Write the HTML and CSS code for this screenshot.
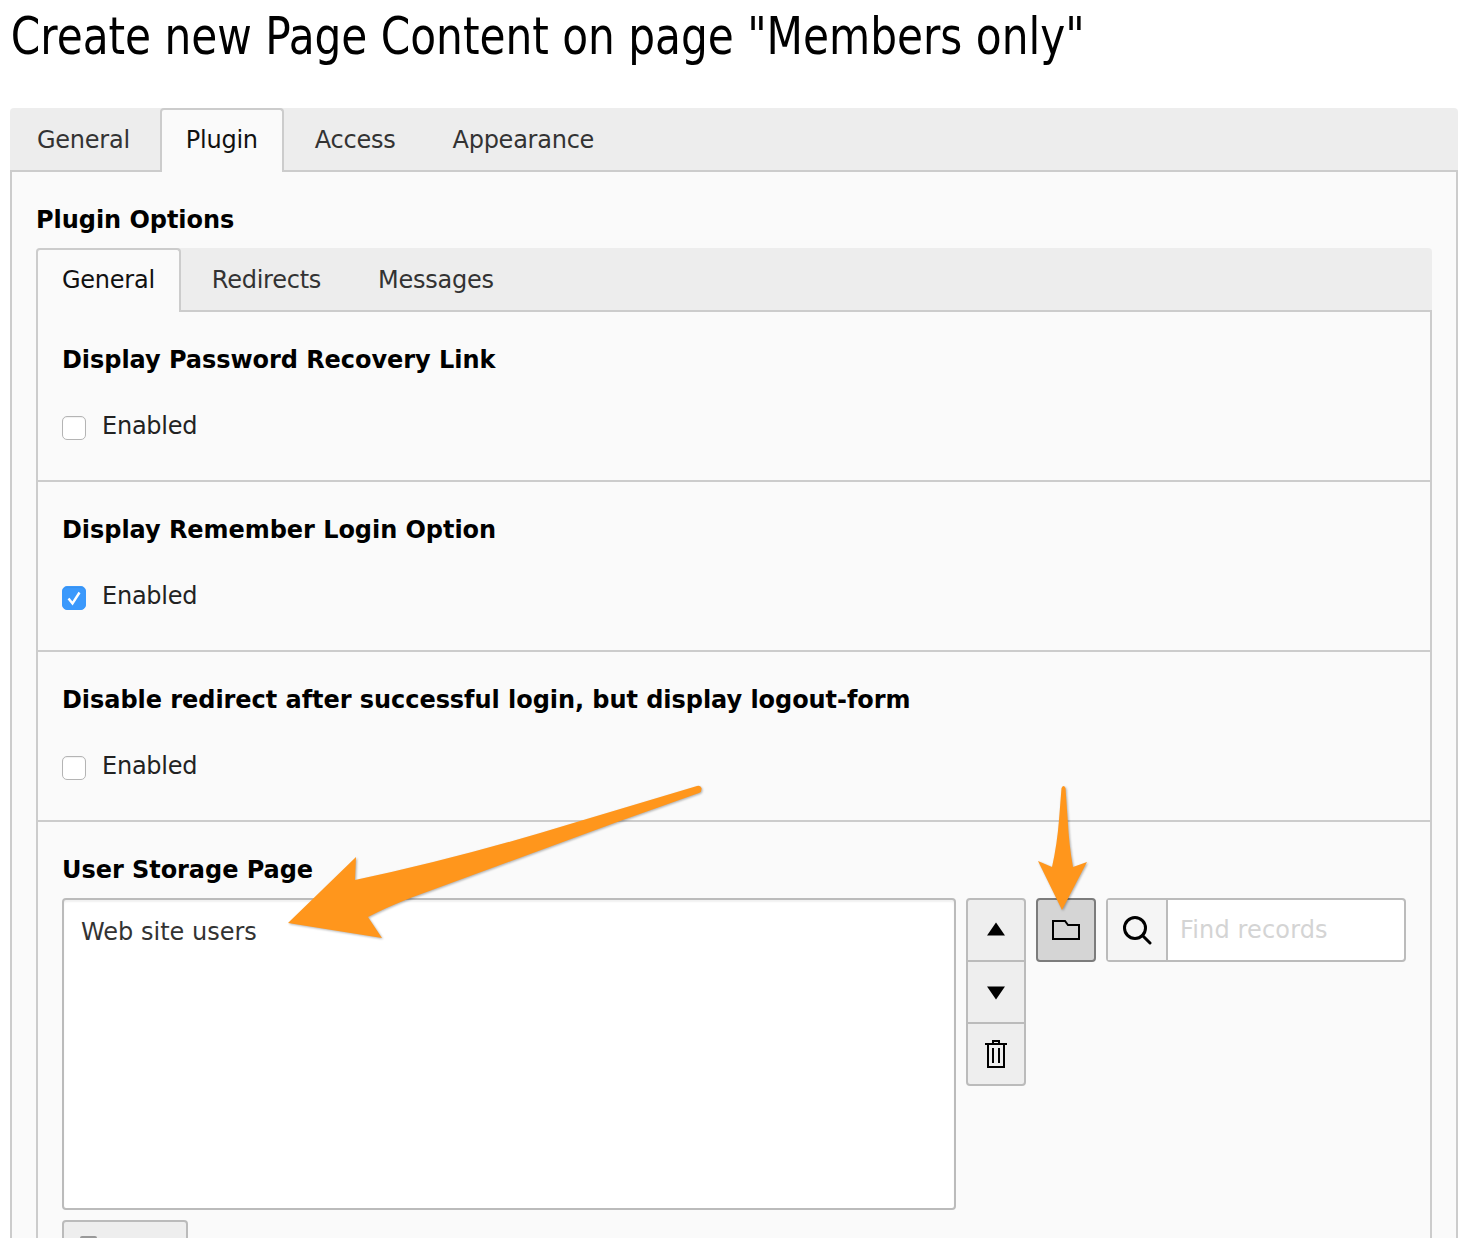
FILE: index.html
```html
<!DOCTYPE html>
<html lang="en">
<head>
<meta charset="utf-8">
<title>Create new Page Content</title>
<link rel="stylesheet" href="styles.css">
</head>
<body>
<h1 class="page-title">Create new Page Content on page "Members only"</h1>
<div class="outer">
  <div class="tabbar">
    <span class="tab">General</span>
    <span class="tab active">Plugin</span>
    <span class="tab">Access</span>
    <span class="tab">Appearance</span>
  </div>
  <div class="panel">
    <h2 class="panel-title">Plugin Options</h2>
    <div class="tabbar">
      <span class="tab active">General</span>
      <span class="tab">Redirects</span>
      <span class="tab">Messages</span>
    </div>
    <div class="inner">
      <section class="section">
        <h3 class="field-title">Display Password Recovery Link</h3>
        <div class="check-row"><span class="checkbox"></span><span>Enabled</span></div>
      </section>
      <section class="section">
        <h3 class="field-title">Display Remember Login Option</h3>
        <div class="check-row"><span class="checkbox checked"><svg viewBox="0 0 24 24" width="24" height="24"><path d="M6.500 12.500l4 5 7-11" fill="none" stroke="#fff" stroke-width="2.400"/></svg></span><span>Enabled</span></div>
      </section>
      <section class="section">
        <h3 class="field-title">Disable redirect after successful login, but display logout-form</h3>
        <div class="check-row"><span class="checkbox"></span><span>Enabled</span></div>
      </section>
      <section class="section storage">
        <h3 class="field-title tight">User Storage Page</h3>
        <div class="storage-row">
          <div class="listbox">Web site users</div>
          <div class="btn-stack">
            <span class="btn"><svg viewBox="0 0 20 16" width="20" height="16"><path d="M10 0.500L19 13.500H1Z"/></svg></span>
            <span class="btn"><svg viewBox="0 0 20 16" width="20" height="16"><path d="M1 2.500H19L10 15.500Z"/></svg></span>
            <span class="btn"><svg viewBox="0 0 24 30" width="24" height="30" class="line"><path d="M1 5H23M9 5V2H15V5M4 5V28H20V5M9 9V24M15 9V24"/></svg></span>
          </div>
          <span class="btn folder"><svg viewBox="0 0 28 20" width="28" height="20" class="line"><path d="M1 19V1H13L16 5H27V19Z"/></svg></span>
          <div class="search">
            <span class="search-icon"><svg viewBox="0 0 30 30" width="30" height="30" class="line thick"><circle cx="13" cy="13" r="10.500"/><path d="M20.500 20.500L28 28" stroke-linecap="round"/></svg></span>
            <span class="search-input">Find records</span>
          </div>
        </div>
        <div class="under-btn"><span class="under-icon"></span></div>
      </section>
    </div>
  </div>
</div>
<svg class="arrows" viewBox="0 0 1464 1238" width="1464" height="1238" aria-hidden="true">
  <path d="M697 786Q700 785 701.500 788Q702 792 699 793L620 821L413 897Q385 908 368 917L382 938L288 923L356 857L355 880Q460 858 580 821Z"/>
  <path d="M1061.500 788Q1063.500 784 1065.500 788L1067.700 820Q1069 845 1073 867L1087 862L1062 910L1038 861L1052 867Q1057 845 1059 820Z"/>
</svg>
</body>
</html>
```
FILE: styles.css
```css
* { box-sizing: border-box; }
html, body { margin: 0; height: 1238px; overflow: hidden; }
body {
  position: relative;
  background: #fff;
  color: #000;
  font-family: "DejaVu Sans", Verdana, sans-serif;
  font-size: 24px;
}
.page-title {
  margin: 0;
  height: 108px;
  padding: 6px 0 0 12px;
  font-family: "DejaVu Sans", sans-serif;
  font-stretch: condensed;
  font-weight: 400;
  font-size: 52px;
  line-height: 60px;
  white-space: nowrap;
  transform: scaleX(.903);
  transform-origin: 0 0;
}
.outer { margin-left: 10px; width: 1448px; }
.tabbar {
  display: flex;
  height: 64px;
  background: #ededed;
  border-bottom: 2px solid #ccc;
  border-radius: 4px 4px 0 0;
}
.tab {
  height: 64px;
  padding: 0 24px;
  border: 2px solid transparent;
  border-bottom: 0;
  margin-right: 5px;
  line-height: 61px;
  letter-spacing: -.25px;
  color: #333;
  white-space: nowrap;
}
.tab.active {
  background: #fafafa;
  border-color: #ccc;
  border-radius: 4px 4px 0 0;
  color: #111;
}
.outer > .tabbar > .tab:first-child { margin: 0 4px 0 1px; }
.panel {
  height: 1100px;
  padding: 32px 24px 0;
  background: #fafafa;
  border: 2px solid #ccc;
  border-top: 0;
}
.panel-title {
  margin: 0 0 12px;
  font-size: 24px;
  line-height: 32px;
  font-weight: 700;
  letter-spacing: -.05px;
}
.inner {
  border: 2px solid #ccc;
  border-top: 0;
  height: 1000px;
}
.section {
  height: 170px;
  padding: 32px 24px 0;
  border-bottom: 2px solid #ccc;
}
.section.storage { border-bottom: 0; height: auto; }
.field-title {
  margin: 0 0 40px;
  font-size: 24px;
  line-height: 32px;
  font-weight: 700;
  letter-spacing: -.05px;
}
.field-title.tight { margin-bottom: 12px; }
.check-row {
  display: flex;
  align-items: flex-start;
  gap: 16px;
  line-height: 20px;
  letter-spacing: -.25px;
  color: #222;
}
.checkbox {
  display: block;
  width: 24px;
  height: 24px;
  background: #fff;
  border: 1px solid #b4b4b4;
  border-radius: 5px;
  box-shadow: inset 0 1px 1px rgba(0,0,0,.06);
}
.checkbox.checked { background: #3b99fc; border-color: #3b99fc; }
.checkbox.checked svg { display: block; margin: -1px; }
.storage-row { display: flex; align-items: flex-start; gap: 10px; }
.listbox {
  width: 894px;
  height: 312px;
  padding: 17px 17px;
  background: #fff;
  border: 2px solid #bbb;
  border-radius: 4px;
  box-shadow: inset 0 2px 2px rgba(0,0,0,.06);
  line-height: 30px;
  color: #333;
}
.btn-stack { display: flex; flex-direction: column; width: 60px; }
.btn {
  display: flex;
  align-items: center;
  justify-content: center;
  width: 60px;
  height: 64px;
  background: #eee;
  border: 2px solid #bbb;
}
.btn-stack .btn { margin-top: -2px; }
.btn-stack .btn:first-child { margin-top: 0; border-radius: 4px 4px 0 0; }
.btn-stack .btn:last-child { border-radius: 0 0 4px 4px; }
.btn svg { fill: #000; }
.line, .btn .line { fill: none; stroke: #000; stroke-width: 2; }
.line.thick { stroke-width: 3; }
.btn.folder { background: #d5d5d5; border-color: #7c7c7c; border-radius: 4px; }
.search {
  display: flex;
  width: 300px;
  height: 64px;
  background: #fff;
  border: 2px solid #bbb;
  border-radius: 4px;
}
.search-icon {
  display: flex;
  align-items: center;
  justify-content: center;
  width: 60px;
  background: #f5f5f5;
  border-right: 2px solid #bbb;
}
.search-input {
  padding-left: 12px;
  line-height: 60px;
  letter-spacing: .15px;
  color: #d4d4d4;
  white-space: nowrap;
}
.under-btn {
  width: 126px;
  height: 64px;
  margin-top: 10px;
  padding: 14px 0 0 16px;
  background: #eee;
  border: 2px solid #bbb;
  border-radius: 4px;
}
.under-icon {
  display: block;
  width: 17px;
  height: 20px;
  background: #999;
  border-radius: 2px;
}
.arrows {
  position: absolute;
  left: 0;
  top: 0;
  fill: #ff961c;
  filter: drop-shadow(1px 1px 1px rgba(0,0,0,.3));
  pointer-events: none;
}
```
